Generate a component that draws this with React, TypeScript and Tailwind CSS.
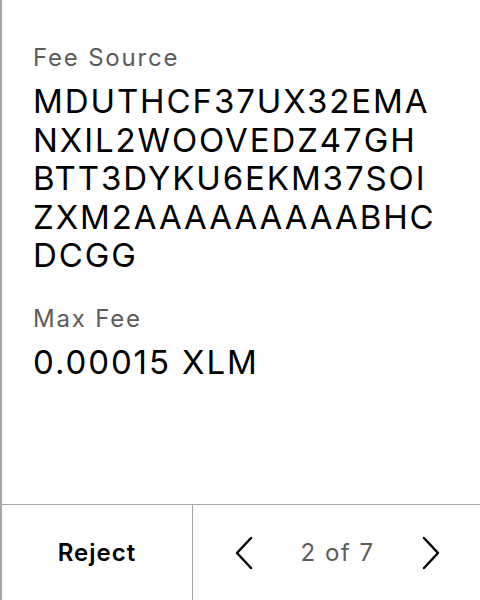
export default function App() {
  const lines = ['MDUTHCF37UX32EMA', 'NXIL2WOOVEDZ47GH', 'BTT3DYKU6EKM37SOI', 'ZXM2AAAAAAAAABHC', 'DCGG']

  return (
    <div
      className="flex h-[600px] w-[480px] flex-col border-l-2 border-[#a6a6a6] bg-white text-black"
      style={{ fontFamily: 'Inter, "Liberation Sans", sans-serif' }}
    >
      <div className="flex-1 px-[31px] pt-[42px]">
        <div className="text-[24px] leading-[32px] tracking-[1.8px] text-[#5c5c5c]">Fee Source</div>
        <div className="mt-[8px] text-[33px] leading-[38.5px] tracking-[1.9px]">
          {lines.map((l) => (
            <div key={l}>{l}</div>
          ))}
        </div>
        <div className="mt-[28px] text-[24px] leading-[32px] tracking-[1.8px] text-[#5c5c5c]">Max Fee</div>
        <div className="mt-[8px] text-[33px] leading-[38.5px] tracking-[1.9px]">0.00015 XLM</div>
      </div>

      {/* bottom action bar */}
      <div className="flex h-[96px] border-t border-[#a6a6a6]">
        <button className="flex w-[191px] items-center justify-center border-r border-[#a6a6a6] text-[24px] font-semibold tracking-[1px]">
          Reject
        </button>
        <div className="flex flex-1 items-center justify-between pl-[40px] pr-[38px]">
          <svg width="22" height="34" viewBox="0 0 22 34" fill="none" stroke="black" strokeWidth="2.5" strokeLinecap="round" strokeLinejoin="round">
            <path d="M18 2 L4 17 L18 32" />
          </svg>
          <span className="text-[24px] tracking-[1.5px] text-[#5c5c5c]">2 of 7</span>
          <svg width="22" height="34" viewBox="0 0 22 34" fill="none" stroke="black" strokeWidth="2.5" strokeLinecap="round" strokeLinejoin="round">
            <path d="M4 2 L18 17 L4 32" />
          </svg>
        </div>
      </div>
    </div>
  )
}
